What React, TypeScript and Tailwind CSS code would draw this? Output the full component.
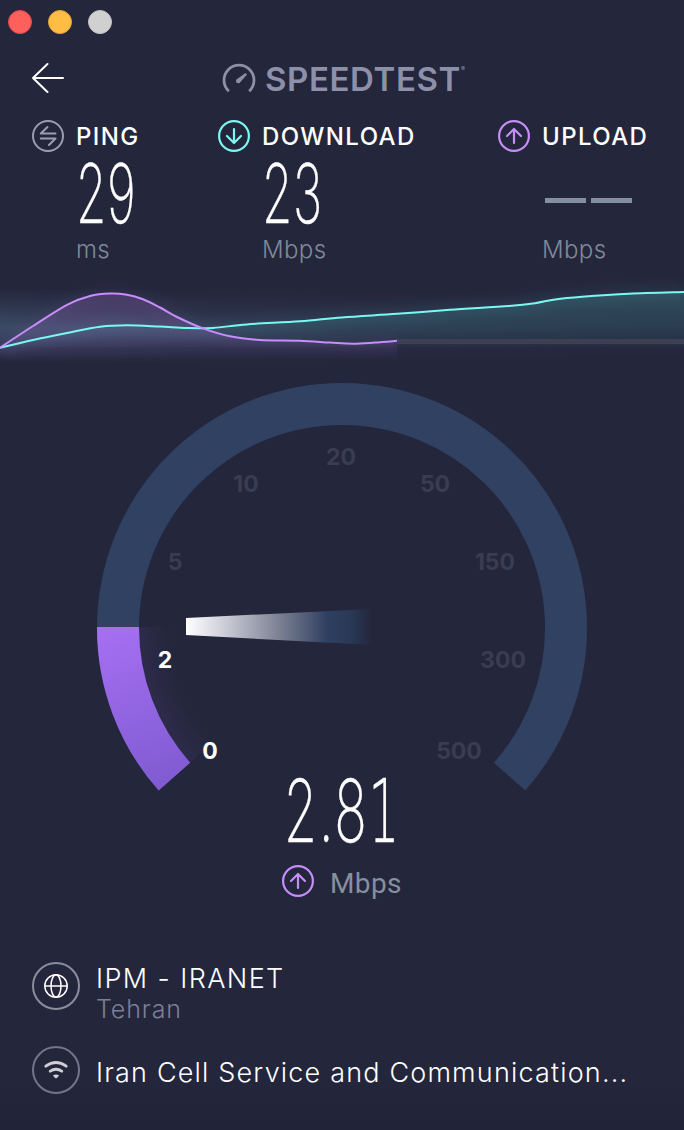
import type { ReactNode } from "react";

const TICKS = [
  { label: "0", x: 210, y: 370.5, active: true },
  { label: "2", x: 165, y: 279.5, active: true },
  { label: "5", x: 175, y: 181.5, active: false },
  { label: "10", x: 246, y: 103.5, active: false },
  { label: "20", x: 341, y: 76.5, active: false },
  { label: "50", x: 435, y: 103.5, active: false },
  { label: "150", x: 495, y: 181.5, active: false },
  { label: "300", x: 503, y: 279.5, active: false },
  { label: "500", x: 459, y: 370.5, active: false },
];

const DOWNLOAD_POINTS = [
  [0, 77.7], [33, 70], [67, 63], [100, 56.7], [127, 55.2], [160, 56.6], [187, 58.1], [213, 57.9], [247, 54.4],
  [300, 51.3], [342, 47.4], [397, 43.8], [450, 39.8], [509, 36], [535, 33.2], [555, 29.4], [582, 26.7], [629, 23.7], [684, 22],
];

const UPLOAD_POINTS = [
  [0, 77.7], [33, 56], [67, 34.8], [90, 26], [110, 23.6], [127, 24.8], [143, 29.3], [160, 37.5], [177, 47], [203, 58.4],
  [230, 66.3], [260, 70], [300, 70.8], [330, 72.6], [353, 73.7], [375, 72.5], [397, 70.8],
];

// Catmull-Rom through the samples
function smooth(points: number[][]) {
  return points.slice(1).reduce((d, p, i) => {
    const a = points[i - 1] ?? points[i];
    const b = points[i];
    const c = points[i + 2] ?? p;
    return `${d}C${b[0] + (p[0] - a[0]) / 6} ${b[1] + (p[1] - a[1]) / 6} ${p[0] - (c[0] - b[0]) / 6} ${p[1] - (c[1] - b[1]) / 6} ${p[0]} ${p[1]}`;
  }, `M${points[0][0]} ${points[0][1]}`);
}

function PingIcon() {
  return (
    <svg width="32" height="32" viewBox="0 0 32 32" fill="none" stroke="#9c9db3" strokeWidth="2" strokeLinecap="round" strokeLinejoin="round">
      <circle cx="16" cy="16" r="15" />
      <path d="M23.500 13.500H8.800L15.500 7M8.800 18.500H23.500L17 25" />
    </svg>
  );
}

function ArrowIcon({ up = false }: { up?: boolean }) {
  return (
    <svg width="32" height="32" viewBox="0 0 32 32" fill="none" stroke={up ? "#c68dfb" : "#7af8f2"} strokeWidth="2.200" strokeLinecap="round" strokeLinejoin="round">
      <circle cx="16" cy="16" r="14.900" />
      {up ? <path d="M16 23V9.500M9 16L16 9L23 16" /> : <path d="M16 9V22.500M9 16L16 23L23 16" />}
    </svg>
  );
}

function Metric({ icon, title, value, unit }: { icon: ReactNode; title: string; value: ReactNode; unit: string }) {
  return (
    <div className="flex gap-3">
      <div className="h-8 w-8 shrink-0">{icon}</div>
      <div className="flex flex-col items-start whitespace-nowrap">
        <div className="h-[33px] text-[24px] leading-[34px] font-medium tracking-[1.4px]">{title}</div>
        <div className="h-20">{value}</div>
        <div className="text-[24px] leading-[33px] font-light tracking-[0.4px] text-[#7f8a9a]">{unit}</div>
      </div>
    </div>
  );
}

function Reading({ children }: { children: string }) {
  return (
    <span className="inline-block origin-left scale-x-[0.6] text-[82px] leading-[82px] font-extralight tracking-[1px] [-webkit-text-stroke:0.4px_white]">
      {children}
    </span>
  );
}

function History() {
  const down = smooth(DOWNLOAD_POINTS);
  const up = smooth(UPLOAD_POINTS);
  return (
    <svg className="block shrink-0" width="684" height="100" viewBox="0 0 684 100" fill="none">
      <defs>
        <linearGradient id="downFill" x1="0" y1="20" x2="0" y2="77" gradientUnits="userSpaceOnUse">
          <stop offset="0" stopColor="#4fa3a8" stopOpacity="0.3" />
          <stop offset="0.55" stopColor="#3f8f96" stopOpacity="0.22" />
          <stop offset="1" stopColor="#3f8f96" stopOpacity="0.04" />
        </linearGradient>
        <linearGradient id="upFill" x1="0" y1="20" x2="0" y2="90" gradientUnits="userSpaceOnUse">
          <stop offset="0" stopColor="#b070d8" stopOpacity="0.22" />
          <stop offset="0.65" stopColor="#9b66c4" stopOpacity="0.2" />
          <stop offset="1" stopColor="#8a5cc0" stopOpacity="0" />
        </linearGradient>
        <linearGradient id="band" x1="0" y1="18" x2="0" y2="98" gradientUnits="userSpaceOnUse">
          <stop offset="0" stopColor="#6b93b8" stopOpacity="0" />
          <stop offset="0.5" stopColor="#6b93b8" stopOpacity="0.34" />
          <stop offset="0.7" stopColor="#7380b8" stopOpacity="0.2" />
          <stop offset="0.95" stopColor="#7380b8" stopOpacity="0" />
        </linearGradient>
        <linearGradient id="fade" x1="0" y1="0" x2="684" y2="0" gradientUnits="userSpaceOnUse">
          <stop offset="0" stopColor="#fff" />
          <stop offset="0.3" stopColor="#fff" stopOpacity="0.5" />
          <stop offset="0.6" stopColor="#fff" stopOpacity="0.28" />
          <stop offset="1" stopColor="#fff" stopOpacity="0.12" />
        </linearGradient>
        <mask id="bandMask" maskUnits="userSpaceOnUse" x="0" y="0" width="684" height="100">
          <rect width="684" height="100" fill="url(#fade)" />
        </mask>
        <filter id="glow" x="-10%" y="-40%" width="120%" height="180%">
          <feGaussianBlur stdDeviation="7" />
        </filter>
      </defs>
      <rect y="18" width="684" height="80" fill="url(#band)" mask="url(#bandMask)" />
      <path d={`${down}V77H0Z`} fill="url(#downFill)" />
      <path d={`${up}V90H0Z`} fill="url(#upFill)" />
      <path d={down} stroke="#5fc3c8" strokeWidth="10" opacity="0.12" filter="url(#glow)" />
      <path d={up} stroke="#a97be0" strokeWidth="10" opacity="0.08" filter="url(#glow)" />
      <rect x="397" y="69" width="287" height="5" fill="#3c4052" />
      <path d={down} stroke="#7af8f2" strokeWidth="2" />
      <path d={up} stroke="#c68dfb" strokeWidth="2" />
    </svg>
  );
}

function Gauge() {
  return (
    <svg className="block shrink-0" width="684" height="414" viewBox="0 0 684 414" fill="none">
      <defs>
        <linearGradient id="progress" x1="110" y1="247" x2="165" y2="405" gradientUnits="userSpaceOnUse">
          <stop stopColor="#a56ff2" />
          <stop offset="1" stopColor="#805bd2" />
        </linearGradient>
        <linearGradient id="needle" x1="186" y1="0" x2="372" y2="0" gradientUnits="userSpaceOnUse">
          <stop stopColor="#ffffff" />
          <stop offset="0.17" stopColor="#d5d6df" />
          <stop offset="0.48" stopColor="#828697" />
          <stop offset="0.76" stopColor="#2f3f60" />
          <stop offset="0.89" stopColor="#293855" />
          <stop offset="1" stopColor="#24263c" />
        </linearGradient>
        <radialGradient id="innerGlow" cx="342" cy="248" r="203" gradientUnits="userSpaceOnUse">
          <stop offset="0.84" stopColor="#65489a" stopOpacity="0" />
          <stop offset="1" stopColor="#65489a" stopOpacity="0.15" />
        </radialGradient>
      </defs>
      <path d="M139 247A203 203 0 0 0 190 382.500L342 248Z" fill="url(#innerGlow)" />
      <path d="M174.400 396.600A224 224 0 1 1 509.600 396.600" stroke="#304161" strokeWidth="42" />
      <path d="M118 247A224 224 0 0 0 174.400 396.600" stroke="url(#progress)" strokeWidth="42" />
      <path d="M186 238L372 229V265L186 255Z" fill="url(#needle)" />
      {TICKS.map((tick) => (
        <text
          key={tick.label}
          x={tick.x}
          y={tick.y}
          textAnchor="middle"
          dominantBaseline="central"
          className={tick.active ? "fill-white text-[23px] font-bold" : "fill-[#3a3d52] text-[23px] font-bold"}
        >
          {tick.label}
        </text>
      ))}
    </svg>
  );
}

export default function App() {
  return (
    <div className="flex h-[1130px] w-[684px] flex-col overflow-hidden bg-linear-to-b from-[#24263c] from-95% to-[#212338] font-['Inter',sans-serif] text-white">
      <div className="flex h-11 shrink-0 items-center gap-4 px-2">
        <span className="h-6 w-6 rounded-full border border-[#e0484a] bg-[#ff605c]" />
        <span className="h-6 w-6 rounded-full border border-[#e0a435] bg-[#ffbd44]" />
        <span className="h-6 w-6 rounded-full border border-[#c2c2c2] bg-[#d0d0d0]" />
      </div>

      <header className="grid h-[76px] shrink-0 grid-cols-[190px_1fr] items-start pl-8 pt-[18px]">
        <svg width="32" height="32" viewBox="0 0 32 32" fill="none" stroke="#fff" strokeWidth="2" strokeLinecap="round" strokeLinejoin="round">
          <path d="M31 16H1M15.500 2L1 16L15.500 30" />
        </svg>
        <div className="-mt-px flex items-center gap-[9px] text-[#8e8fa8]">
          <svg className="mt-[2px]" width="34" height="34" viewBox="0 0 34 34" fill="none" stroke="currentColor" strokeWidth="2.800">
            <path d="M6.800 28.200A15 15 0 1 1 27.200 28.200" />
            <path d="M23.500 10L25 11.500L17.800 19.800Q16 21 14.500 19.500Q13.200 18 14.500 16.500Z" fill="currentColor" stroke="none" />
          </svg>
          <div className="flex items-start">
            <span className="text-[33px] leading-9 font-semibold tracking-[0.6px]">SPEEDTEST</span>
            <span className="mt-[5px] text-[6px] leading-none">®</span>
          </div>
        </div>
      </header>

      <section className="grid h-[150px] shrink-0 grid-cols-[186px_280px_1fr] pl-8">
        <Metric icon={<PingIcon />} title="PING" value={<Reading>29</Reading>} unit="ms" />
        <Metric icon={<ArrowIcon />} title="DOWNLOAD" value={<Reading>23</Reading>} unit="Mbps" />
        <Metric
          icon={<ArrowIcon up />}
          title="UPLOAD"
          value={
            <div className="flex gap-[5px] pl-[3px] pt-[45px]">
              <span className="h-[5px] w-[41px] bg-[#84909f]" />
              <span className="h-[5px] w-[41px] bg-[#84909f]" />
            </div>
          }
          unit="Mbps"
        />
      </section>

      <History />
      <div className="h-[10px] shrink-0" />
      <Gauge />

      <section className="-mt-6 flex h-48 shrink-0 flex-col items-center">
        <span className="scale-x-[0.62] pl-2 text-[87px] leading-[82px] font-extralight tracking-[3px] [-webkit-text-stroke:0.4px_white]">
          2.8<span className="inline-block origin-left scale-x-[0.9] font-['DejaVu_Sans_Light','DejaVu_Sans',sans-serif] font-extralight [-webkit-text-stroke:0.5px_white]">1</span>
        </span>
        <div className="mt-2 flex items-center gap-4">
          <ArrowIcon up />
          <span className="pt-[7px] text-[28px] leading-8 tracking-[0.4px] text-[#84909f] font-['Roboto',sans-serif]">Mbps</span>
        </div>
      </section>

      <footer className="flex flex-col gap-9 pl-8">
        <div className="flex h-12 gap-4">
          <svg className="shrink-0" width="48" height="48" viewBox="0 0 48 48" fill="none" stroke="#fff" strokeWidth="1.500">
            <circle cx="24" cy="24" r="23" stroke="#8c8d9c" strokeWidth="2" />
            <circle cx="24" cy="24" r="11.200" />
            <ellipse cx="24" cy="24" rx="5" ry="11.200" />
            <path d="M12.800 24H35.200" />
          </svg>
          <div className="whitespace-nowrap">
            <p className="pt-px text-[27px] leading-8 font-[350] tracking-[1.4px]">IPM - IRANET</p>
            <p className="text-[25px] leading-[29px] font-light tracking-[0.9px] text-[#7d7f95]">Tehran</p>
          </div>
        </div>
        <div className="flex h-12 gap-4">
          <svg className="shrink-0" width="48" height="48" viewBox="0 0 48 48" fill="none" stroke="#cfcfd6" strokeWidth="2.800">
            <circle cx="24" cy="24" r="23" stroke="#74758a" strokeWidth="2" />
            <path strokeLinecap="round" d="M13.800 20.200Q24 12.800 34.200 20.200M18.200 25.200Q24 21.300 29.800 25.200" />
            <path d="M21 29.300Q24 27.500 27 29.300Q26.500 31 24 32.500Q21.500 31 21 29.300Z" fill="#cfcfd6" stroke="none" />
          </svg>
          <p className="pt-[11px] text-[27px] leading-8 font-[350] tracking-[1.17px] whitespace-nowrap">Iran Cell Service and Communication...</p>
        </div>
      </footer>
    </div>
  );
}
